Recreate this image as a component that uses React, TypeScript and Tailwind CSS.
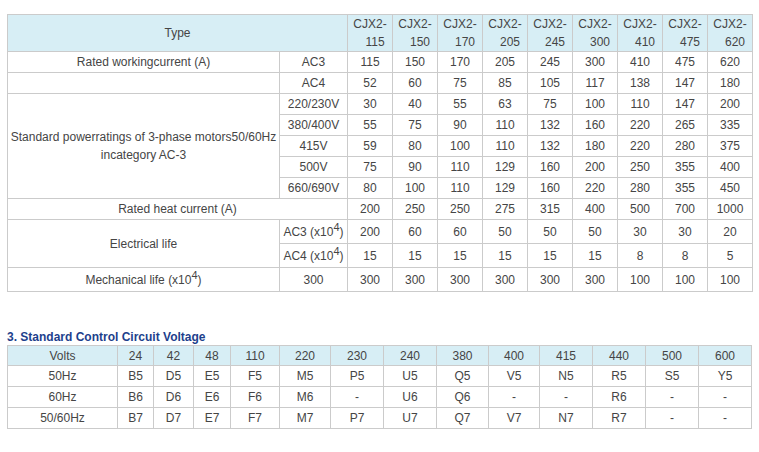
const models = ['115', '150', '170', '205', '245', '300', '410', '475', '620']

const rows1 = [
  { label: 'Rated workingcurrent (A)', sub: 'AC3', vals: ['115', '150', '170', '205', '245', '300', '410', '475', '620'] },
  { label: '', sub: 'AC4', vals: ['52', '60', '75', '85', '105', '117', '138', '147', '180'] },
]

const powerRows = [
  { sub: '220/230V', vals: ['30', '40', '55', '63', '75', '100', '110', '147', '200'] },
  { sub: '380/400V', vals: ['55', '75', '90', '110', '132', '160', '220', '265', '335'] },
  { sub: '415V', vals: ['59', '80', '100', '110', '132', '180', '220', '280', '375'] },
  { sub: '500V', vals: ['75', '90', '110', '129', '160', '200', '250', '355', '400'] },
  { sub: '660/690V', vals: ['80', '100', '110', '129', '160', '220', '280', '355', '450'] },
]

const voltCols = [
  { v: '24', w: 'w-[36px]' },
  { v: '42', w: 'w-[40px]' },
  { v: '48', w: 'w-[37px]' },
  { v: '110', w: 'w-[49px]' },
  { v: '220', w: 'w-[51px]' },
  { v: '230', w: 'w-[53px]' },
  { v: '240', w: 'w-[53px]' },
  { v: '380', w: 'w-[52px]' },
  { v: '400', w: 'w-[51px]' },
  { v: '415', w: 'w-[53px]' },
  { v: '440', w: 'w-[53px]' },
  { v: '500', w: 'w-[53px]' },
  { v: '600', w: 'w-[53px]' },
]

const voltRows = [
  { hz: '50Hz', codes: ['B5', 'D5', 'E5', 'F5', 'M5', 'P5', 'U5', 'Q5', 'V5', 'N5', 'R5', 'S5', 'Y5'] },
  { hz: '60Hz', codes: ['B6', 'D6', 'E6', 'F6', 'M6', '-', 'U6', 'Q6', '-', '-', 'R6', '-', '-'] },
  { hz: '50/60Hz', codes: ['B7', 'D7', 'E7', 'F7', 'M7', 'P7', 'U7', 'Q7', 'V7', 'N7', 'R7', '-', '-'] },
]

const cell = 'border border-[#cbcbcb] p-0 text-center align-middle'
const head = 'bg-[#d7eef5]'

// "(x10⁴)" with the raised exponent
const X104 = () => (
  <>
    (x10<sup className="text-[11px] -top-[5px]">4</sup>)
  </>
)

export default function App() {
  return (
    <div className="bg-white w-[759px] h-[452px] pt-[14px] pl-[7px] text-[12px] text-[#454545] font-['Liberation_Sans',Arial,sans-serif]">
      <table className="table-fixed border-collapse w-[744px]">
        <colgroup>
          <col className="w-[272px]" />
          <col className="w-[68px]" />
          {models.map((m) => (
            <col key={m} className="w-[45px]" />
          ))}
        </colgroup>
        <tbody>
          <tr className="h-[37px]">
            <td colSpan={2} className={`${cell} ${head}`}>Type</td>
            {models.map((m) => (
              <td key={m} className={`${cell} ${head} leading-[18px]`}>
                <div>CJX2-</div>
                <div className="pl-[10px]">{m}</div>
              </td>
            ))}
          </tr>
          {rows1.map((r) => (
            <tr key={r.sub} className="h-[21px]">
              <td className={cell}>{r.label}</td>
              <td className={cell}>{r.sub}</td>
              {r.vals.map((v, i) => (
                <td key={i} className={cell}>{v}</td>
              ))}
            </tr>
          ))}
          {powerRows.map((r, idx) => (
            <tr key={r.sub} className="h-[21px]">
              {idx === 0 && (
                <td rowSpan={5} className={`${cell} leading-[18px]`}>
                  Standard powerratings of 3-phase motors50/60Hz
                  <br />
                  incategory AC-3
                </td>
              )}
              <td className={cell}>{r.sub}</td>
              {r.vals.map((v, i) => (
                <td key={i} className={cell}>{v}</td>
              ))}
            </tr>
          ))}
          <tr className="h-[21px]">
            <td colSpan={2} className={cell}>Rated heat current (A)</td>
            {['200', '250', '250', '275', '315', '400', '500', '700', '1000'].map((v, i) => (
              <td key={i} className={cell}>{v}</td>
            ))}
          </tr>
          <tr className="h-[24px]">
            <td rowSpan={2} className={cell}>Electrical life</td>
            <td className={cell}>AC3 <X104 /></td>
            {['200', '60', '60', '50', '50', '50', '30', '30', '20'].map((v, i) => (
              <td key={i} className={cell}>{v}</td>
            ))}
          </tr>
          <tr className="h-[24px]">
            <td className={cell}>AC4 <X104 /></td>
            {['15', '15', '15', '15', '15', '15', '8', '8', '5'].map((v, i) => (
              <td key={i} className={cell}>{v}</td>
            ))}
          </tr>
          <tr className="h-[24px]">
            <td className={cell}>Mechanical life <X104 /></td>
            <td className={cell}>300</td>
            {['300', '300', '300', '300', '300', '300', '100', '100', '100'].map((v, i) => (
              <td key={i} className={cell}>{v}</td>
            ))}
          </tr>
        </tbody>
      </table>

      <h3 className="mt-[37px] mb-0 text-[12px] leading-[16px] font-bold text-[#1d3f8c]">
        3. Standard Control Circuit Voltage
      </h3>

      <table className="table-fixed border-collapse w-[744px]">
        <colgroup>
          <col className="w-[110px]" />
          {voltCols.map((c) => (
            <col key={c.v} className={c.w} />
          ))}
        </colgroup>
        <tbody>
          <tr className="h-[20px]">
            <td className={`${cell} ${head}`}>Volts</td>
            {voltCols.map((c) => (
              <td key={c.v} className={`${cell} ${head}`}>{c.v}</td>
            ))}
          </tr>
          {voltRows.map((r) => (
            <tr key={r.hz} className="h-[21px]">
              <td className={cell}>{r.hz}</td>
              {r.codes.map((c, i) => (
                <td key={i} className={cell}>{c}</td>
              ))}
            </tr>
          ))}
        </tbody>
      </table>
    </div>
  )
}
